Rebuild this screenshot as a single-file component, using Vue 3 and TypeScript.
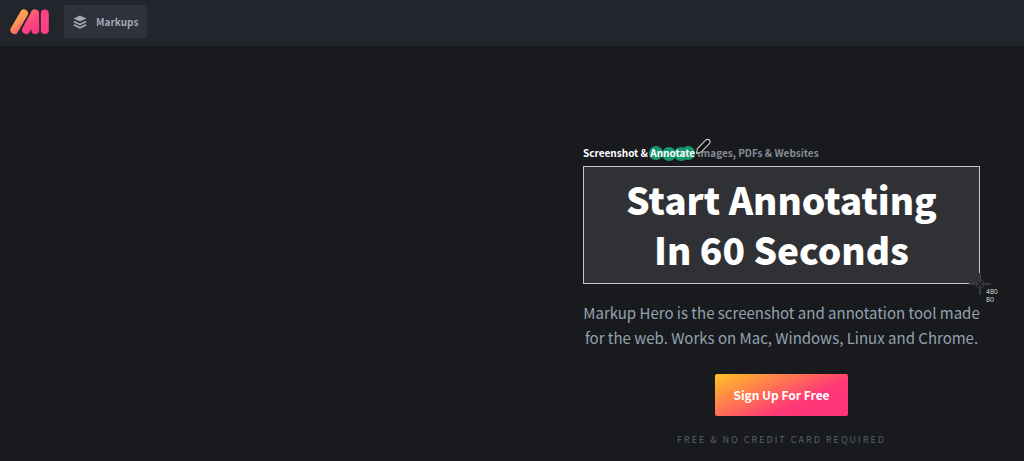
<script setup lang="ts">
const title: string[] = ['Start Annotating', 'In 60 Seconds']
const description: string[] = [
  'Markup Hero is the screenshot and annotation tool made',
  'for the web. Works on Mac, Windows, Linux and Chrome.',
]
const selection = { width: 480, height: 80 }
</script>

<template>
  <div class="page">
    <header class="topbar">
      <a class="logo" href="#" aria-label="Home">
        <svg width="40" height="28" viewBox="0 0 40 28" aria-hidden="true">
          <defs>
            <linearGradient id="stem" gradientUnits="userSpaceOnUse" x1="3" y1="2" x2="20" y2="24">
              <stop offset="0" stop-color="#ffb03a" />
              <stop offset="0.4" stop-color="#ff9a50" />
              <stop offset="1" stop-color="#fb3a80" />
            </linearGradient>
            <linearGradient id="bar" gradientUnits="userSpaceOnUse" x1="20" y1="0" x2="32" y2="24">
              <stop offset="0" stop-color="#ff7466" />
              <stop offset="0.5" stop-color="#fb4480" />
              <stop offset="1" stop-color="#fb3584" />
            </linearGradient>
          </defs>
          <g fill="none" stroke-width="8" stroke-linecap="round">
            <path d="M14 5.5L4.4 22" stroke="url(#stem)" />
            <path d="M25 5.5L16 22M25 5.5L25.3 22" stroke="url(#bar)" />
            <path d="M34.8 5.5L34.8 22" stroke="#fb4383" />
          </g>
        </svg>
      </a>
      <button class="markups" type="button">
        <svg width="14" height="14" viewBox="0 0 14 14" aria-hidden="true">
          <path d="M7 .4L13.4 3.5L7 6.6L.6 3.5Z" fill="currentColor" />
          <path d="M.8 6.5L7 9.5L13.2 6.5M.8 9.8L7 12.8L13.2 9.8" fill="none" stroke="currentColor" stroke-width="1.7" />
        </svg>
        <span>Markups</span>
      </button>
    </header>

    <main class="hero">
      <section class="content">
        <p class="tagline">
          <span class="strong">Screenshot &amp; </span><span class="marked"><svg class="blob" width="46" height="16" viewBox="0 0 46 16" aria-hidden="true">
            <g fill="#16966d"><circle cx="7" cy="8" r="7" /><circle cx="20" cy="9" r="7" /><circle cx="32" cy="9" r="7" /><circle cx="39" cy="8" r="7" /></g>
          </svg><span class="word">Annotate</span><svg class="pen" width="16" height="18" viewBox="0 0 16 18" aria-hidden="true">
            <path d="M1.5 15.5L2.5 10.5L10.5 2.3Q12.6.4 14.4 2Q16 3.7 14.1 5.8L6.4 13.8Z" fill="#0b0d10" stroke="#c3c4c5" stroke-width="1.2" stroke-linejoin="round" />
          </svg></span><span> Images, PDFs &amp; Websites</span>
        </p>

        <div class="selection">
          <h1><span v-for="line in title" :key="line">{{ line }}</span></h1>
          <div class="cursor">
            <svg width="22" height="22" viewBox="0 0 22 22" aria-hidden="true">
              <g fill="none" stroke="#38393c">
                <path d="M11 0V22M0 11H22" stroke-width="2" />
                <circle cx="11" cy="11" r="4" stroke-width="1" />
              </g>
              <circle cx="11" cy="11" r="1.5" fill="#1a1c1e" />
            </svg>
            <span class="size">{{ selection.width }}<br />{{ selection.height }}</span>
          </div>
        </div>

        <p class="description"><span v-for="line in description" :key="line">{{ line }}</span></p>
        <button class="signup" type="button">Sign Up For Free</button>
        <p class="note">FREE &amp; NO CREDIT CARD REQUIRED</p>
      </section>
    </main>
  </div>
</template>

<style>
body {
  margin: 0;
  background: #191a1e;
}
</style>

<style scoped>
.page {
  min-height: 100vh;
  box-sizing: border-box;
  background: #191a1e;
  color: #fff;
  font-family: "Noto Sans CJK SC", "Noto Sans", sans-serif;
}

.topbar {
  display: flex;
  align-items: center;
  gap: 14px;
  box-sizing: border-box;
  height: 46px;
  padding: 0 10px 3px;
  background: #22252c;
}

.logo,
.logo svg,
.markups svg {
  display: block;
}

.markups {
  display: flex;
  align-items: center;
  gap: 9px;
  height: 33px;
  padding: 0 9px;
  border: 0;
  border-radius: 2px;
  background: #2e323c;
  color: #a3a8b2;
  font: 700 10px/16px "Noto Sans CJK SC", "Noto Sans", sans-serif;
}

.hero {
  display: flex;
  justify-content: flex-end;
  padding: 99px 44px 0;
}

.content {
  display: flex;
  flex-direction: column;
  align-items: center;
  width: 397px;
}

p,
h1 {
  margin: 0;
}

.tagline {
  align-self: stretch;
  white-space: pre-wrap;
  color: #858a96;
  font-size: 10px;
  font-weight: 700;
  line-height: 16px;
}

.strong,
.word {
  color: #fff;
}

.marked,
.word {
  position: relative;
}

.blob {
  position: absolute;
  top: 0;
  left: -1px;
}

.pen {
  position: absolute;
  right: -16px;
  bottom: 4px;
}

.selection {
  position: relative;
  align-self: stretch;
  box-sizing: border-box;
  margin-top: 5px;
  padding: 7px 0 9px;
  border: 1px solid #c4c5c7;
  background: #303135;
}

h1 {
  font-size: 37px;
  font-weight: 900;
  line-height: 50px;
  text-align: center;
}

h1 span,
.description span {
  display: block;
}

.cursor {
  position: absolute;
  right: -12px;
  bottom: -12px;
}

.cursor svg {
  display: block;
}

.size {
  position: absolute;
  top: 15px;
  left: 17px;
  color: #d5d6d8;
  font: 7px/8px "Liberation Sans", sans-serif;
}

.description {
  margin-top: 16px;
  color: #93a2b0;
  font-size: 15px;
  line-height: 25px;
  text-align: center;
  white-space: nowrap;
}

.signup {
  height: 42px;
  margin-top: 24px;
  padding: 0 18px;
  border: 0;
  border-radius: 2px;
  background: linear-gradient(155deg, #ffc423 0%, #ff3877 65%, #fd337b 100%);
  color: #fff;
  font: 700 12px/20px "Noto Sans CJK SC", "Noto Sans", sans-serif;
}

.note {
  margin-top: 16px;
  color: #56606c;
  font-size: 9px;
  line-height: 16px;
  letter-spacing: 2px;
}
</style>
